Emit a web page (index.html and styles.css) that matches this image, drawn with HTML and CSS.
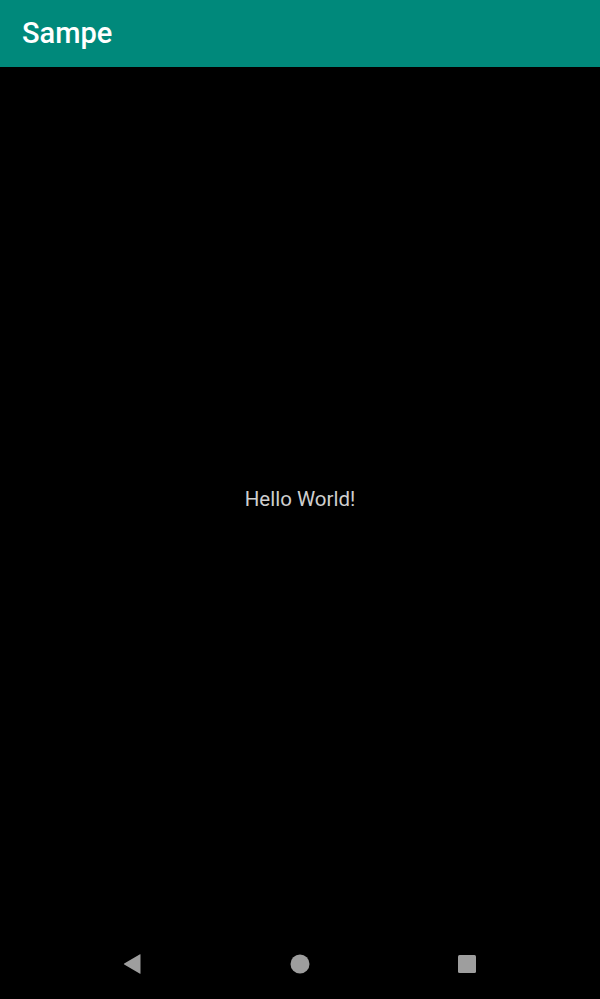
FILE: index.html
```html
<!DOCTYPE html>
<html lang="en">
<head>
    <meta charset="UTF-8">
    <meta name="viewport" content="width=device-width, initial-scale=1.0">
    <title>Sampe</title>
    <link rel="stylesheet" href="styles.css">
</head>
<body>
    <div class="screen">
        <header class="app-bar">
            <h1 class="app-title">Sampe</h1>
        </header>

        <main class="content">
            <p class="hello">Hello World!</p>
        </main>

        <nav class="nav-bar">
            <svg class="nav-icon" width="20" height="20" viewBox="0 0 20 20">
                <path d="M17.5 0.5 L17.5 19.5 Q17.5 20 17 19.7 L1.2 10.6 Q0.5 10 1.2 9.4 L17 0.3 Q17.5 0 17.5 0.5 Z" fill="#9e9e9e"/>
            </svg>
            <svg class="nav-icon" width="20" height="20" viewBox="0 0 20 20">
                <circle cx="10" cy="10" r="9.5" fill="#9e9e9e"/>
            </svg>
            <svg class="nav-icon" width="20" height="20" viewBox="0 0 20 20">
                <rect x="1" y="1" width="18" height="18" rx="1.5" fill="#9e9e9e"/>
            </svg>
        </nav>
    </div>
</body>
</html>
```

FILE: styles.css
```css
* {
    margin: 0;
    padding: 0;
    box-sizing: border-box;
}

body {
    font-family: Roboto, 'Noto Sans', sans-serif;
    background-color: #000;
}

.screen {
    display: flex;
    flex-direction: column;
    height: 999px;
}

/* App Bar */
.app-bar {
    height: 67px;
    background-color: #00897b;
    display: flex;
    align-items: center;
    padding-left: 22px;
    box-shadow: 0 1px 2px rgba(0, 0, 0, 0.3);
}

.app-title {
    color: #fff;
    font-size: 29px;
    font-weight: 500;
    padding-bottom: 1px;
}

/* Content */
.content {
    flex: 1;
    display: flex;
    align-items: center;
    justify-content: center;
}

.hello {
    color: #cfcfcf;
    font-size: 20.5px;
    padding-top: 2px;
}

/* Navigation Bar */
.nav-bar {
    height: 70px;
    display: flex;
    align-items: center;
    justify-content: space-between;
    padding: 0 123px;
}
```
